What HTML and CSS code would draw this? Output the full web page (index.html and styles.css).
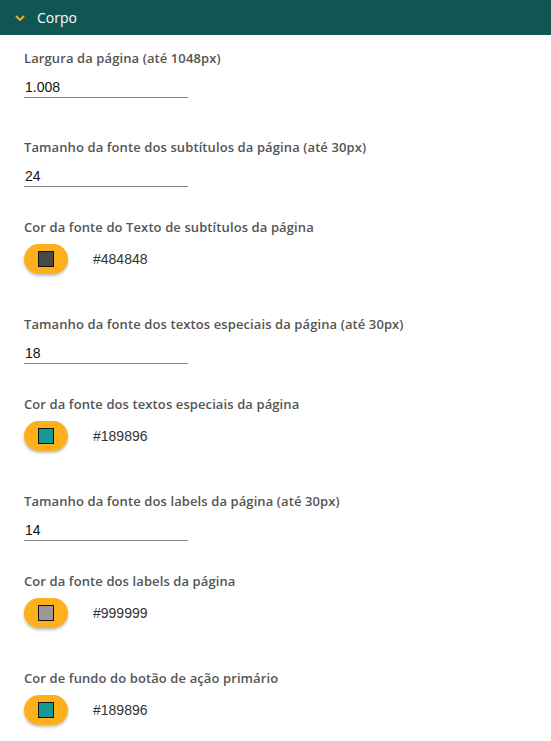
FILE: index.html
```html
<!DOCTYPE html>
<html lang="pt">
<head>
<meta charset="utf-8">
<link rel="stylesheet" href="styles.css">
</head>
<body>
<div class="section-header">
  <svg class="chevron" width="10" height="6" viewBox="0 0 10 6"><path d="M1 1 L5 5 L9 1" fill="none" stroke="#f5a623" stroke-width="2"/></svg>
  <span class="section-title">Corpo</span>
</div>
<div class="section-body">
  <div class="field field-first">
    <div class="label">Largura da página (até 1048px)</div>
    <div class="text-input">1.008</div>
  </div>
  <div class="field">
    <div class="label">Tamanho da fonte dos subtítulos da página (até 30px)</div>
    <div class="text-input">24</div>
  </div>
  <div class="field">
    <div class="label">Cor da fonte do Texto de subtítulos da página</div>
    <div class="color-row">
      <div class="swatch-btn"><span class="swatch" style="background:#484848"></span></div>
      <span class="hex">#484848</span>
    </div>
  </div>
  <div class="field">
    <div class="label">Tamanho da fonte dos textos especiais da página (até 30px)</div>
    <div class="text-input">18</div>
  </div>
  <div class="field">
    <div class="label">Cor da fonte dos textos especiais da página</div>
    <div class="color-row">
      <div class="swatch-btn"><span class="swatch" style="background:#189896"></span></div>
      <span class="hex">#189896</span>
    </div>
  </div>
  <div class="field">
    <div class="label">Tamanho da fonte dos labels da página (até 30px)</div>
    <div class="text-input">14</div>
  </div>
  <div class="field">
    <div class="label">Cor da fonte dos labels da página</div>
    <div class="color-row">
      <div class="swatch-btn"><span class="swatch" style="background:#999999"></span></div>
      <span class="hex">#999999</span>
    </div>
  </div>
  <div class="field">
    <div class="label">Cor de fundo do botão de ação primário</div>
    <div class="color-row">
      <div class="swatch-btn"><span class="swatch" style="background:#189896"></span></div>
      <span class="hex">#189896</span>
    </div>
  </div>
</div>
</body>
</html>
```

FILE: styles.css
```css
* { box-sizing: border-box; }
html, body { margin: 0; padding: 0; background: #fff; }
body { font-family: "Open Sans", Lato, sans-serif; }

.section-header {
  height: 35px;
  background: #125654;
  display: flex;
  align-items: center;
  padding-left: 15px;
}
.chevron { display: block; margin-right: 12px; }
.section-title {
  color: #fff;
  font-size: 14px;
  font-family: "Open Sans", sans-serif;
}

.section-body { padding: 0 24px; }

.field { padding-top: 31.5px; }
.field-first { padding-top: 14px; margin-bottom: 8px; }

.label {
  font-size: 13px;
  line-height: 18px;
  font-weight: 600;
  letter-spacing: 0.1px;
  color: #555;
}

.text-input {
  width: 164px;
  height: 24px;
  margin-top: 7px;
  border-bottom: 1px solid #888;
  font-family: "Liberation Sans", Arial, sans-serif;
  font-size: 14px;
  line-height: 20px;
  padding-top: 3px;
  color: #111;
  padding-left: 1px;
}

.color-row {
  display: flex;
  align-items: center;
  margin-top: 8px;
  margin-bottom: 9px;
}
.swatch-btn {
  width: 44px;
  height: 30px;
  border-radius: 15px;
  background: #fdb01b;
  box-shadow: 0 2px 3px rgba(0,0,0,0.25);
  display: flex;
  align-items: center;
  justify-content: center;
}
.swatch {
  width: 16px;
  height: 16px;
  border: 1.5px solid #111;
}
.hex {
  margin-left: 25px;
  font-family: "Liberation Sans", Arial, sans-serif;
  font-size: 14px;
  color: #333;
}
```
